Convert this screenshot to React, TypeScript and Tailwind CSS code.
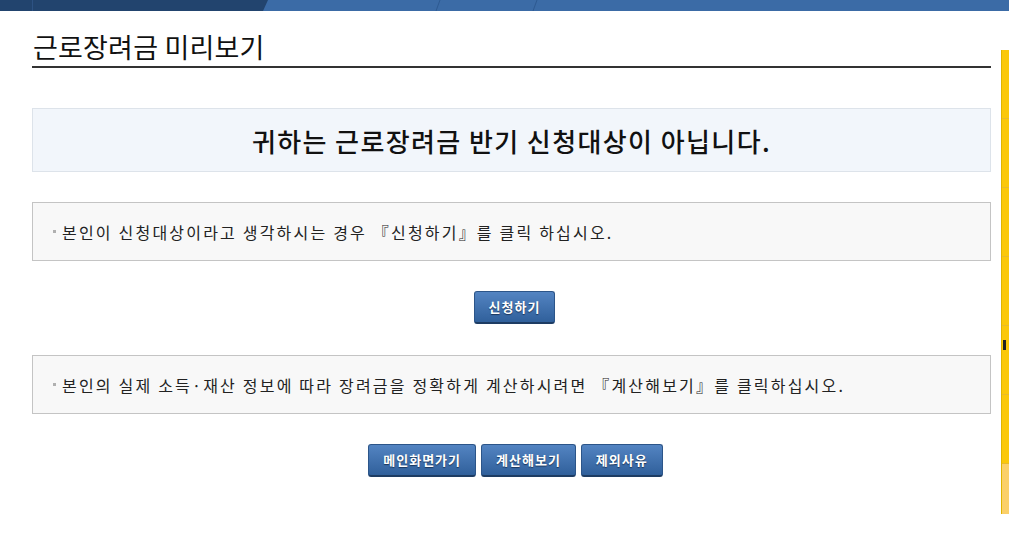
import React from "react";

const KR = "font-['Noto_Sans_CJK_KR','Noto_Sans',sans-serif]";

function BlueButton({ label }: { label: string }) {
  return (
    <button
      className={`${KR} h-[33px] rounded-[3px] border border-[#2c5589] border-b-[2px] border-b-[#1d3c63] bg-gradient-to-b from-[#5384c2] to-[#30609b] px-[14px] text-[13px] font-bold text-white tracking-[1px] [text-shadow:0_1px_1px_#1b355a]`}
    >
      {label}
    </button>
  );
}

function NoticeBox({ children }: { children: React.ReactNode }) {
  return (
    <div className="flex h-[59px] items-center border border-[#c4c4c4] bg-[#f8f8f8] pl-[20px]">
      <span className="mr-[6px] h-[3px] w-[3px] bg-[#b0b0b0]" />
      <span className={`${KR} text-[16px] tracking-[2.2px] text-[#222]`}>{children}</span>
    </div>
  );
}

export default function App() {
  return (
    <div className="relative h-[542px] w-[1009px] overflow-hidden bg-white">
      {/* top banner strip */}
      <svg className="block" width="1009" height="11" viewBox="0 0 1009 11">
        <rect width="1009" height="11" fill="#3b6ba6" />
        <polygon points="0,0 268,0 263,11 0,11" fill="#22446e" />
        <line x1="32.5" y1="0" x2="32.5" y2="11" stroke="#2d5283" />
        <line x1="440" y1="0" x2="436" y2="11" stroke="#2e5a91" />
        <line x1="537" y1="0" x2="533" y2="11" stroke="#2e5a91" />
      </svg>

      <div className="mr-[18px] ml-[32px]">
        {/* Title */}
        <div className="mt-[19px] border-b-2 border-[#333] pb-[2px]">
          <h1 className={`${KR} text-[27px] leading-[34px] tracking-[0.2px] text-[#111] pl-[1px]`}>
            근로장려금 미리보기
          </h1>
        </div>

        {/* Result message */}
        <div className="mt-[40px] flex h-[64px] items-center justify-center border border-[#dde3ea] bg-[#f2f6fb]">
          <p className={`${KR} text-[26px] font-medium tracking-[1.4px] text-[#111]`}>
            귀하는 근로장려금 반기 신청대상이 아닙니다.
          </p>
        </div>

        <div className="mt-[30px]">
          <NoticeBox>본인이 신청대상이라고 생각하시는 경우 『신청하기』를 클릭 하십시오.</NoticeBox>
        </div>

        <div className="mt-[30px] flex justify-center pl-[6px]">
          <BlueButton label="신청하기" />
        </div>

        <div className="mt-[31px]">
          <NoticeBox>
            본인의 실제 소득·재산 정보에 따라 장려금을 정확하게 계산하시려면 『계산해보기』를 클릭하십시오.
          </NoticeBox>
        </div>

        <div className="mt-[30px] flex justify-center gap-[5px] pl-[8px]">
          <BlueButton label="메인화면가기" />
          <BlueButton label="계산해보기" />
          <BlueButton label="제외사유" />
        </div>
      </div>

      {/* quick menu edge */}
      <div className="absolute top-[50px] left-[1001px] flex h-[464px] w-[12px] flex-col border-l border-[#e0b400] bg-[#fbc80a]">
        {[0, 1, 2, 3, 4, 5].map((i) => (
          <div key={i} className="h-[69px] border-b border-[#e9bb2a]">
            {i === 4 && <div className="mt-[14px] ml-[1px] h-[10px] w-[3px] bg-[#222]" />}
          </div>
        ))}
        <div className="flex-1 bg-[#fbd06a]" />
      </div>
    </div>
  );
}
